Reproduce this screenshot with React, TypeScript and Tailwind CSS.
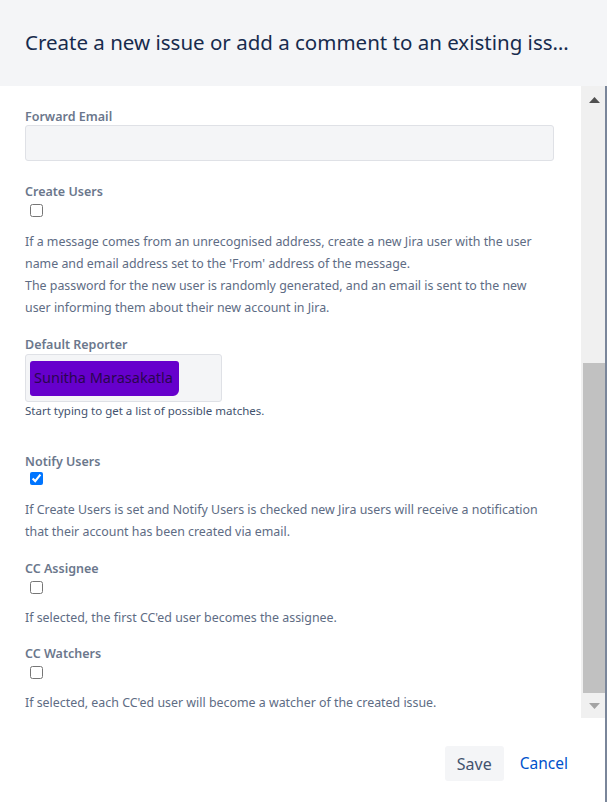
import React from "react";

const font = { fontFamily: '"Noto Sans", "Open Sans", Arial, sans-serif' };

function Label({ text, className = "" }: { text: string; className?: string }) {
  return (
    <div className={`text-[12.5px] font-semibold leading-4 text-[#6b778c] ${className}`}>
      {text}
    </div>
  );
}

function Check({ checked = false, className = "" }: { checked?: boolean; className?: string }) {
  return (
    <input
      type="checkbox"
      defaultChecked={checked}
      className={`m-0 ml-[5px] block h-[13px] w-[13px] accent-[#0075ff] ${className}`}
    />
  );
}

function Desc({ lines, className = "" }: { lines: string[]; className?: string }) {
  return (
    <p className={`text-[12.4px] leading-[22px] text-[#5e6c84] ${className}`}>
      {lines.map((l, i) => (
        <span key={i} className="block whitespace-nowrap">
          {l}
        </span>
      ))}
    </p>
  );
}

function Scrollbar() {
  return (
    <div className="flex h-full w-[24px] shrink-0 flex-col bg-[#f0f0f0]">
      <div className="flex h-[20px] items-end justify-center pb-[3px] pl-[2px]">
        <svg width="11" height="6" viewBox="0 0 11 6">
          <path d="M0 6 L5.5 0 L11 6 Z" fill="#505050" />
        </svg>
      </div>
      <div className="ml-[2px] mt-[257px] h-[330px] bg-[#c1c1c1]" />
      <div className="flex h-[25px] items-center justify-center pl-[2px]">
        <svg width="11" height="6" viewBox="0 0 11 6">
          <path d="M0 0 L11 0 L5.5 6 Z" fill="#a3a3a3" />
        </svg>
      </div>
    </div>
  );
}

export default function App() {
  return (
    <div className="flex h-[802px] w-[607px] flex-col bg-white" style={font}>
      <header className="flex h-[86px] shrink-0 items-center bg-[#f4f5f7] pl-[25px] pr-[32px]">
        <h1 className="truncate pb-[2px] text-[20.5px] font-normal leading-7 text-[#172b4d]">
          Create a new issue or add a comment to an existing issue
        </h1>
      </header>
      <div className="flex flex-1 border-r-2 border-[#7a869a]">
        <div className="flex min-w-0 flex-1 flex-col">
          <div className="flex h-[632px]">
            <div className="min-w-0 flex-1 overflow-hidden pl-[25px] pr-[27px] pt-[23px]">
              <Label text="Forward Email" />
              <div className="h-[36px] rounded-[3px] border border-[#dfe1e6] bg-[#f4f5f7]" />

              <Label text="Create Users" className="mt-[23px]" />
              <Check className="mt-[4px]" />
              <Desc
                className="mt-[14px]"
                lines={[
                  "If a message comes from an unrecognised address, create a new Jira user with the user",
                  "name and email address set to the 'From' address of the message.",
                  "The password for the new user is randomly generated, and an email is sent to the new",
                  "user informing them about their new account in Jira.",
                ]}
              />

              <Label text="Default Reporter" className="mt-[18px]" />
              <div className="mt-[1px] flex h-[48px] w-[197px] items-center rounded-[3px] border border-[#dfe1e6] bg-[#f4f5f7] pl-[4px]">
                <div className="flex h-[35px] w-[149px] items-center rounded-[3px] rounded-br-[6px] bg-[#6600cc] pl-[4px] text-[14.5px] text-[#2a0650]">
                  Sunitha Marasakatla
                </div>
              </div>
              <div className="mt-[1px] text-[11.5px] leading-4 text-[#42526e]">
                Start typing to get a list of possible matches.
              </div>

              <Label text="Notify Users" className="mt-[35px]" />
              <Check checked className="mt-[2px]" />
              <Desc
                className="mt-[14px]"
                lines={[
                  "If Create Users is set and Notify Users is checked new Jira users will receive a notification",
                  "that their account has been created via email.",
                ]}
              />

              <Label text="CC Assignee" className="mt-[18px]" />
              <Check className="mt-[4px]" />
              <Desc
                className="mt-[13px]"
                lines={["If selected, the first CC'ed user becomes the assignee."]}
              />

              <Label text="CC Watchers" className="mt-[17px]" />
              <Check className="mt-[4px]" />
              <Desc
                className="mt-[13px]"
                lines={["If selected, each CC'ed user will become a watcher of the created issue."]}
              />
            </div>
            <Scrollbar />
          </div>
          <footer className="flex flex-1 items-start justify-end gap-[16px] pr-[37px] pt-[28px]">
            <button
              type="button"
              className="h-[35px] w-[59px] rounded-[3px] bg-[#f4f5f7] text-[16px] text-[#42526e]"
            >
              Save
            </button>
            <button type="button" className="h-[35px] text-[15.5px] text-[#0052cc]">
              Cancel
            </button>
          </footer>
        </div>
      </div>
    </div>
  );
}
